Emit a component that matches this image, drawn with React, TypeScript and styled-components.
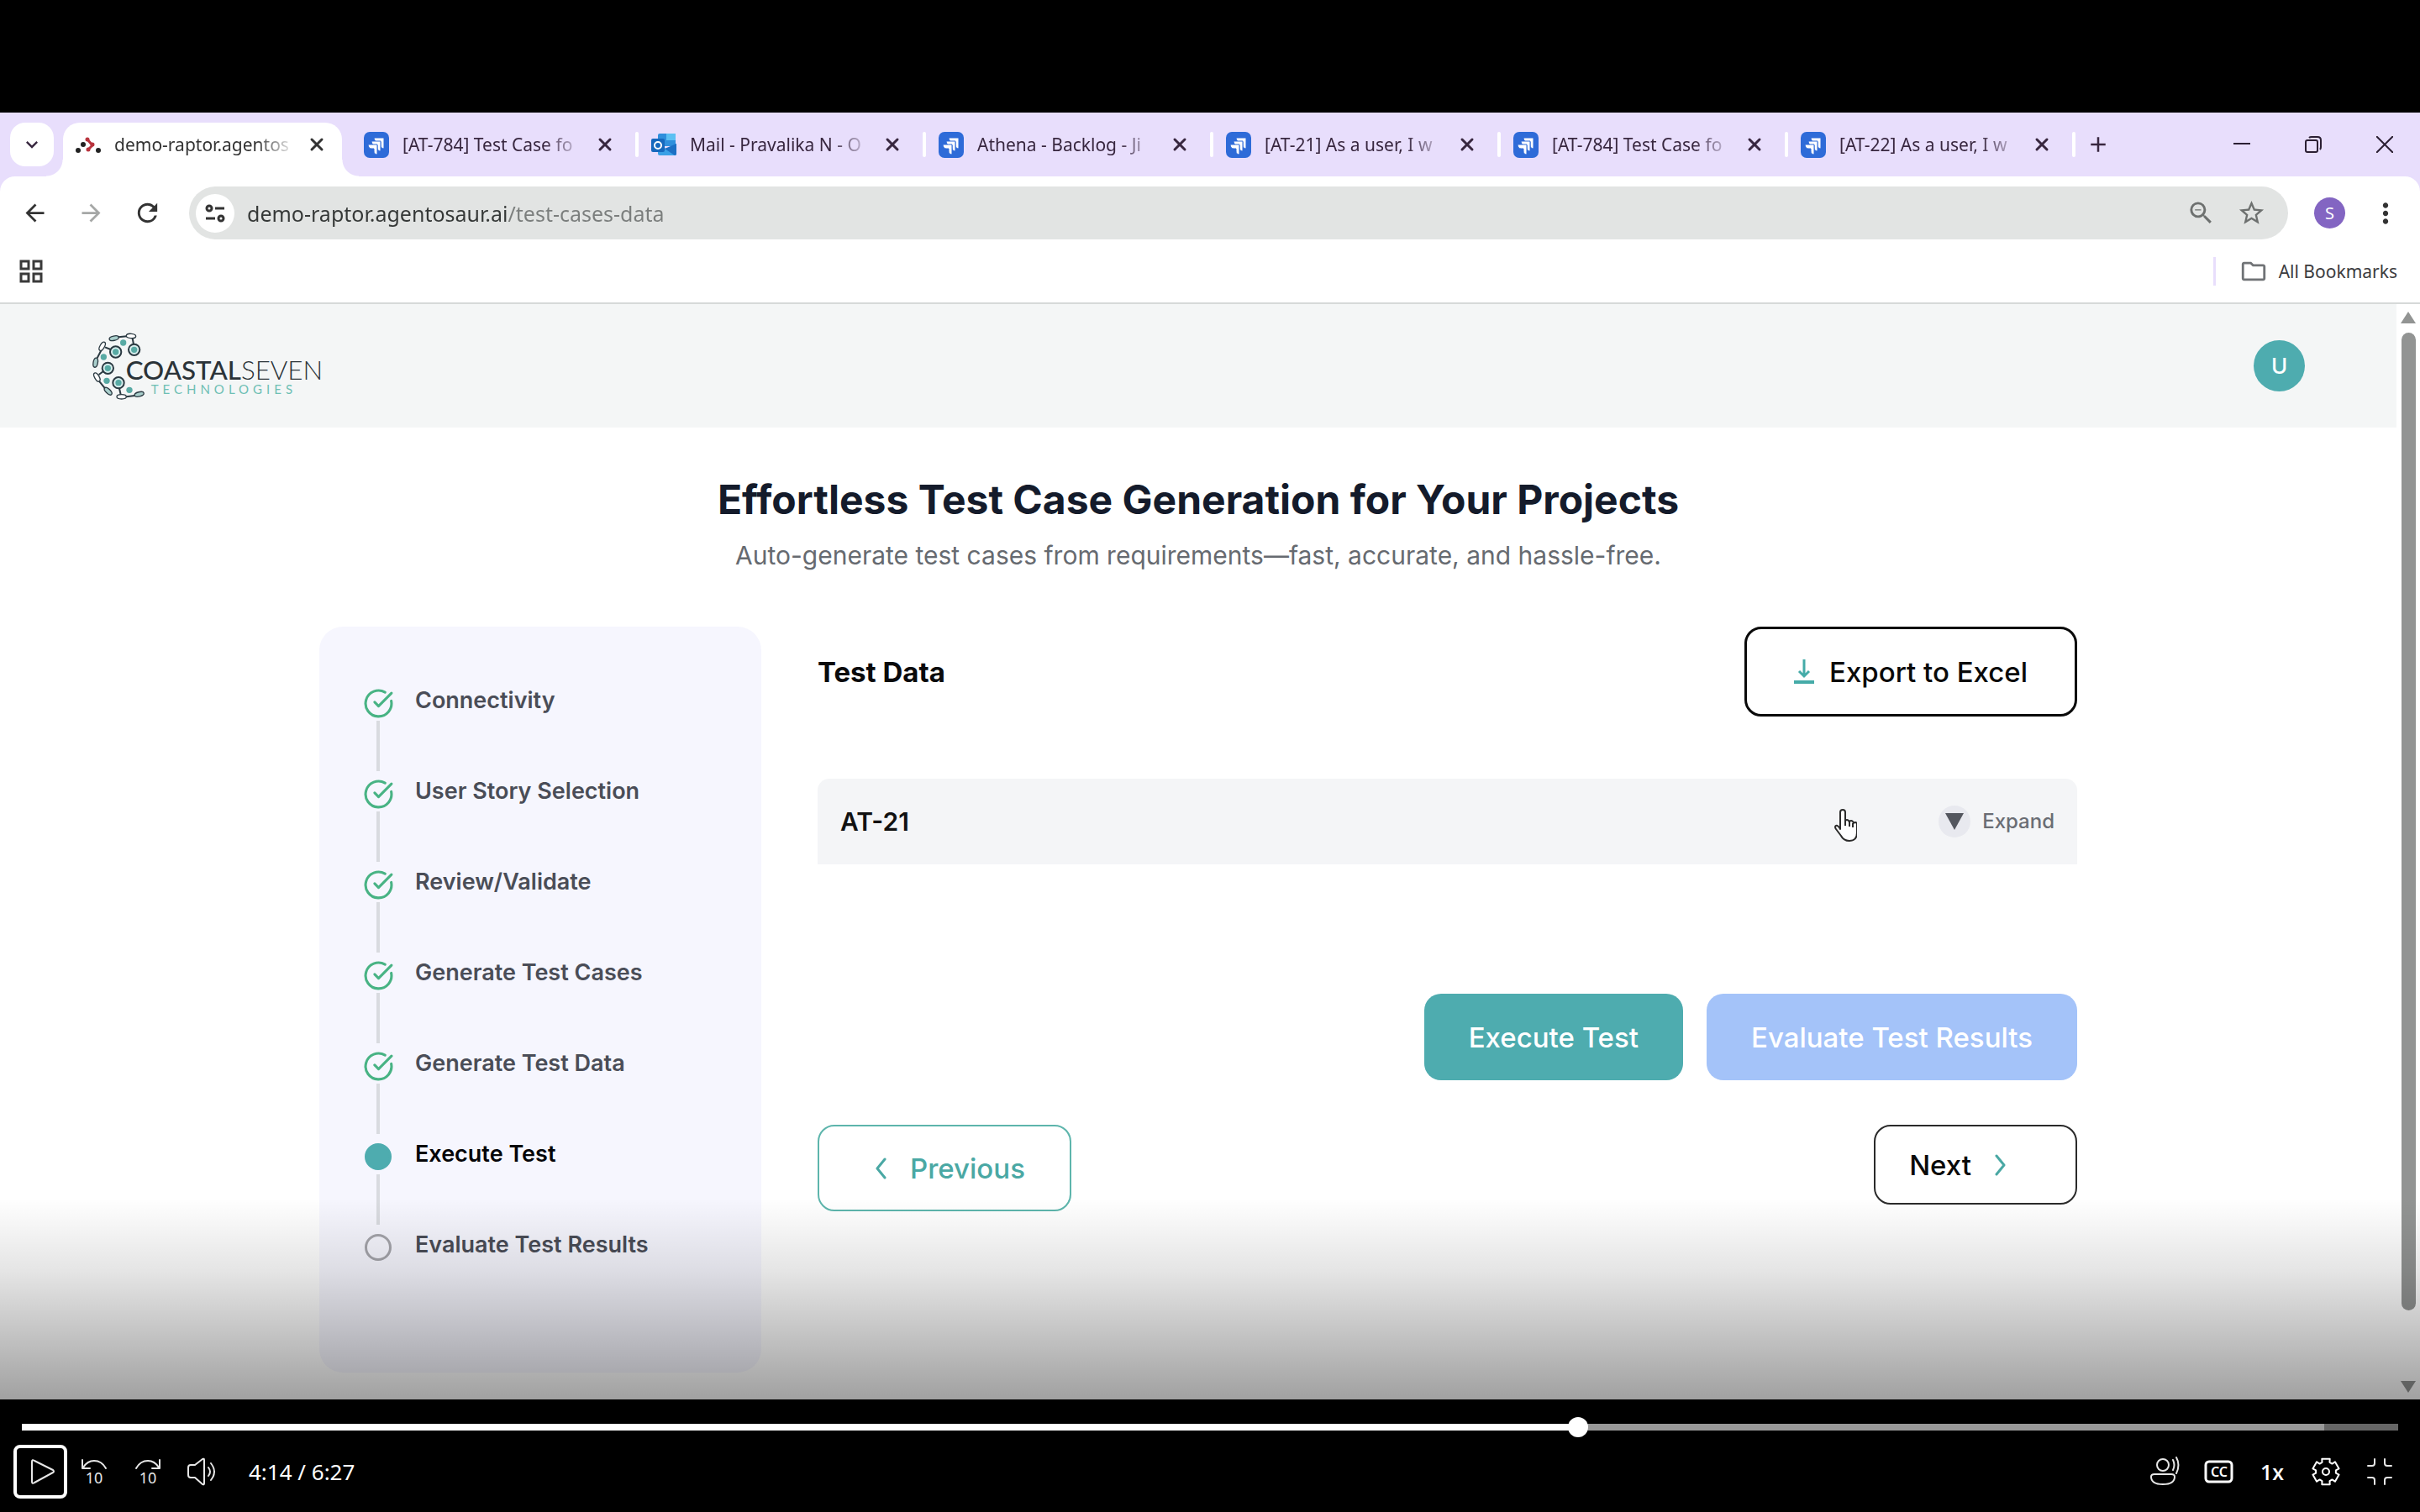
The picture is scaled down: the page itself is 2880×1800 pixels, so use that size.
import React from "react";
import styled, { createGlobalStyle, css } from "styled-components";
import { CircleCheckBig, X } from "lucide-react";
import {
  MdAdd,
  MdArrowBack,
  MdArrowForward,
  MdExpandMore,
  MdMoreVert,
  MdOutlineFolder,
  MdRefresh,
  MdStarOutline,
  MdZoomOut,
} from "react-icons/md";

const ui = `"Noto Sans", "Open Sans", sans-serif`;
const inter = `Inter, Roboto, sans-serif`;
const teal = "#4eacaf";

const GlobalStyle = createGlobalStyle`
  * { box-sizing: border-box; }
  body { margin: 0; background: #000; }
  button, input { font: inherit; color: inherit; margin: 0; }
  h1, h2, p, ol { margin: 0; padding: 0; }
  svg { display: block; flex: none; }
`;

/* ---------- player shell ---------- */

const Player = styled.div`
  min-height: 100vh;
  padding-top: 134px;
  display: flex;
  flex-direction: column;
  background: #000;
`;

const Frame = styled.div`
  position: relative;
  flex: 1;
  display: flex;
  flex-direction: column;
  background: #fff;
`;

const Shade = styled.div`
  position: absolute;
  inset: auto 0 0 0;
  height: 240px;
  pointer-events: none;
  background: linear-gradient(rgba(0, 0, 0, 0), rgba(0, 0, 0, 0.1) 36%, rgba(0, 0, 0, 0.37));
`;

const IconButton = styled.button<{ $size?: number; $color?: string }>`
  flex: none;
  width: ${(p) => p.$size ?? 64}px;
  height: ${(p) => p.$size ?? 64}px;
  padding: 0;
  border: 0;
  background: none;
  color: ${(p) => p.$color ?? "inherit"};
  display: flex;
  align-items: center;
  justify-content: center;
`;

/* ---------- browser chrome ---------- */

const TabStrip = styled.div`
  display: flex;
  align-items: center;
  height: 76px;
  padding-left: 12px;
  background: #e8defc;
  color: #38273f;
  font: 21px/32px ${ui};
`;

const TabSearch = styled.button`
  flex: none;
  width: 52px;
  height: 52px;
  margin-right: 11px;
  padding: 0;
  border: 0;
  border-radius: 18px;
  background: #fff;
  display: flex;
  align-items: center;
  justify-content: center;
`;

const TabBox = styled.div<{ $active?: boolean }>`
  position: relative;
  flex: none;
  display: flex;
  align-items: center;
  width: 342px;
  padding-left: 15px;
  height: 52px;

  ${(p) =>
    p.$active
      ? css`
          width: 332px;
          height: 64px;
          margin-right: 11px;
          align-self: flex-end;
          background: #fff;
          border-radius: 20px 20px 0 0;
          padding-bottom: 12px;
          color: #333;
          &::before,
          &::after {
            content: "";
            position: absolute;
            bottom: 0;
            width: 20px;
            height: 20px;
          }
          &::before {
            left: -20px;
            background: radial-gradient(circle at 0 0, transparent 19px, #fff 20px);
          }
          &::after {
            right: -20px;
            background: radial-gradient(circle at 100% 0, transparent 19px, #fff 20px);
          }
        `
      : css`
          &::after {
            content: "";
            width: 4px;
            height: 30px;
            margin-left: auto;
            border-radius: 2px;
            background: #fff;
          }
        `}
`;

const TabTitle = styled.span`
  width: 216px;
  margin: 0 11px 0 16px;
  white-space: nowrap;
  mask-image: linear-gradient(90deg, #000 78%, transparent);
`;

const Spacer = styled.div`
  flex: 1;
`;

const WindowButton = styled.button`
  flex: none;
  width: 85px;
  height: 76px;
  padding: 0;
  border: 0;
  background: none;
  display: flex;
  align-items: center;
  justify-content: center;
`;

const ToolbarBack = styled.div`
  background: #e8defc;
`;

const Toolbar = styled.div`
  display: flex;
  align-items: center;
  height: 75px;
  padding: 12px 8px 0;
  border-radius: 18px 18px 0 0;
  background: #fff;
  color: #333;
`;

const Omnibox = styled.form`
  flex: 1;
  display: flex;
  align-items: center;
  height: 63px;
  margin: 0 16px;
  padding: 0 14px 0 8px;
  border-radius: 32px;
  background: #e2e4e3;
`;

const SiteInfo = styled(IconButton)`
  border-radius: 50%;
  background: #fff;
`;

const Address = styled.input`
  flex: 1;
  min-width: 0;
  margin-left: 15px;
  padding: 0;
  border: 0;
  outline: 0;
  font: 25px/36px ${ui};
  color: transparent;
  background: linear-gradient(90deg, #353837 309px, #7b7e7d 309px);
  background-clip: text;
`;

const Profile = styled.button`
  flex: none;
  width: 37px;
  height: 37px;
  margin: 0 14px 0 15px;
  padding: 0;
  border: 0;
  border-radius: 50%;
  background: #8365c2;
  color: #fff;
  font: 20px/37px ${ui};
`;

const Bookmarks = styled.div`
  display: flex;
  align-items: center;
  height: 77px;
  padding: 0 27px 0 21px;
  border-bottom: 2px solid #d6d9d8;
  background: #fff;
  color: #3c3c40;
  font: 21px/32px ${ui};
`;

const AllBookmarks = styled.button`
  display: flex;
  align-items: center;
  gap: 13px;
  padding: 0 0 0 28px;
  border: 0;
  border-left: 3px solid #e8defc;
  background: none;
`;

/* ---------- web page ---------- */

const Viewport = styled.div`
  flex: 1;
  display: flex;
`;

const Page = styled.div`
  flex: 1;
  min-width: 0;
  font-family: ${inter};
`;

const SiteHeader = styled.header`
  display: flex;
  align-items: center;
  justify-content: space-between;
  height: 147px;
  padding: 0 109px;
  background: #f4f6f6;
`;

const UserBadge = styled.button`
  width: 61px;
  height: 61px;
  padding: 0;
  border: 0;
  border-radius: 50%;
  background: ${teal};
  color: #fff;
  font: 500 26px/61px ${inter};
`;

const Hero = styled.section`
  padding: 54px 0 65px;
  text-align: center;
`;

const Title = styled.h1`
  font: 700 48px/64px ${inter};
  color: #141b2b;
`;

const Subtitle = styled.p`
  margin-top: 14px;
  font: 400 30px/40px ${inter};
  color: #666a70;
`;

const Columns = styled.div`
  display: flex;
  align-items: flex-start;
  gap: 67px;
  padding: 0 380px 32px;
`;

const Sidebar = styled.nav`
  flex: none;
  width: 526px;
  padding: 75px 54px 133px;
  border-radius: 28px;
  background: #f6f6fe;
`;

const Steps = styled.ol`
  list-style: none;
`;

const Step = styled.li<{ $current?: boolean }>`
  display: flex;
  gap: 28px;
  font: 600 27px/26px ${inter};
  color: ${(p) => (p.$current ? "#050508" : "#4a4d57")};
`;

const StepRail = styled.div`
  display: flex;
  flex-direction: column;
  align-items: center;
  width: 32px;
`;

const StepLine = styled.div`
  width: 4px;
  height: 60px;
  margin: 5px 0 11px;
  background: #d9dbe0;
`;

const StepDot = styled.div<{ $filled?: boolean }>`
  width: 32px;
  height: 32px;
  border-radius: 50%;
  border: 3px solid ${(p) => (p.$filled ? teal : "#a5a5ab")};
  background: ${(p) => (p.$filled ? teal : "transparent")};
`;

const DoneMark = styled.div`
  display: flex;
  align-items: center;
  justify-content: center;
  width: 36px;
  height: 32px;
`;

const Main = styled.main`
  flex: 1;
  min-width: 0;
`;

const Row = styled.div<{ $top?: number; $end?: boolean }>`
  display: flex;
  align-items: ${(p) => (p.$end ? "center" : "flex-start")};
  justify-content: ${(p) => (p.$end ? "flex-end" : "space-between")};
  gap: 28px;
  margin-top: ${(p) => p.$top ?? 0}px;
`;

const SectionTitle = styled.h2`
  align-self: center;
  font: 700 33px/40px ${inter};
  color: #0a0a0c;
`;

const Action = styled.button<{ $kind: "export" | "solid" | "muted" | "previous" | "next" }>`
  display: flex;
  align-items: center;
  justify-content: center;
  padding: 0 53px;
  height: 103px;
  border: 0;
  border-radius: 20px;
  background: #fff;
  font: 500 33px/40px ${inter};
  color: #fff;
  white-space: nowrap;

  ${(p) => p.$kind === "export" && css`
    height: 107px;
    padding: 0 56px;
    gap: 18px;
    border: 3px solid #0a0a0a;
    color: #0a0a0a;
  `}
  ${(p) => p.$kind === "solid" && css`background: ${teal};`}
  ${(p) => p.$kind === "muted" && css`background: #a4c3f9;`}
  ${(p) => p.$kind === "previous" && css`
    padding: 0 53px 0 66px;
    gap: 28px;
    border: 2px solid #5db5ac;
    color: #4aa8a4;
  `}
  ${(p) => p.$kind === "next" && css`
    height: 95px;
    padding: 0 82px 0 40px;
    gap: 28px;
    border: 2px solid #2a2a2a;
    color: #0a0a0a;
  `}
`;

const StoryRow = styled.div`
  position: relative;
  display: flex;
  align-items: center;
  justify-content: space-between;
  height: 102px;
  margin-top: 74px;
  padding: 0 27px;
  border-radius: 14px 14px 0 0;
  background: #f4f5f7;
  font: 600 30px/40px ${inter};
  color: #111;
`;

const Expand = styled.button`
  display: flex;
  align-items: center;
  gap: 14px;
  padding: 0;
  border: 0;
  background: none;
  font: 500 24px/38px ${inter};
  color: #6a6d74;
`;

const ExpandMark = styled.span`
  display: flex;
  align-items: center;
  justify-content: center;
  width: 38px;
  height: 38px;
  border-radius: 50%;
  background: #e8e9ef;
`;

const Pointer = styled.svg`
  position: absolute;
  right: 262px;
  top: 36px;
`;

const Scrollbar = styled.div`
  flex: none;
  display: flex;
  flex-direction: column;
  align-items: center;
  width: 28px;
  padding: 9px 0 8px;
  background: #fff;
`;

const Thumb = styled.div`
  flex: 1;
  width: 17px;
  margin: 11px 0 84px;
  border-radius: 9px;
  background: #929493;
`;

/* ---------- player controls ---------- */

const Controls = styled.div`
  height: 134px;
  padding: 20px 16px 16px;
  background: #000;
  color: #fff;
`;

const Seek = styled.input`
  display: block;
  appearance: none;
  width: calc(100% - 20px);
  height: 26px;
  margin: 0 10px;
  background: none;

  &::-webkit-slider-runnable-track {
    height: 8px;
    background: linear-gradient(
      90deg,
      #fff var(--played),
      #999 var(--played),
      #999 var(--buffered),
      #666 var(--buffered)
    );
  }
  &::-webkit-slider-thumb {
    appearance: none;
    width: 24px;
    height: 24px;
    margin-top: -8px;
    border-radius: 50%;
    background: #fff;
  }
`;

const ControlRow = styled.div`
  display: flex;
  align-items: center;
  margin-top: 8px;
  font: 26px/36px ${ui};
`;

const PlayButton = styled(IconButton)`
  border: 4px solid #fff;
  border-radius: 8px;
`;

const Time = styled.span`
  margin-left: 24px;
`;

const Speed = styled(IconButton)`
  font: 600 25px/36px "Open Sans", sans-serif;
`;

/* ---------- drawings ---------- */

const Glyph = ({ children, width = 2 }: { children: React.ReactNode; width?: number }) => (
  <svg width="64" height="64" viewBox="0 0 64 64" fill="none" stroke="#e6e6e6" strokeWidth={width} strokeLinecap="round" strokeLinejoin="round">
    {children}
  </svg>
);

const Chevron = ({ left }: { left?: boolean }) => (
  <svg width="14" height="26" fill="none" stroke="#4aa8a4" strokeWidth="3" strokeLinecap="round" strokeLinejoin="round">
    <path d={left ? "M12 2L3 13l9 11" : "M2 2l9 11-9 11"} />
  </svg>
);

const JiraIcon = () => (
  <svg width="30" height="31" viewBox="0 0 30 31">
    <rect width="30" height="31" rx="7" fill="#2e6bd8" />
    <g fill="#fff" stroke="#2e6bd8" strokeWidth="1">
      <path d="M12 7h12v13c-3 0-4-2-4-4v-4h-4c-2 0-4-2-4-5z" />
      <path d="M9 11h11v12c-3 0-4-2-4-4v-3h-3c-2 0-4-2-4-5z" />
      <path d="M5 15h11v12c-3 0-4-2-4-4v-3H9c-2 0-4-2-4-5z" />
    </g>
  </svg>
);

const OutlookIcon = () => (
  <svg width="30" height="31" viewBox="0 0 30 31">
    <rect x="8" y="2" width="21" height="15" rx="2" fill="#2f8fdc" />
    <rect x="18" y="2" width="11" height="8" fill="#5cc0f2" />
    <path d="M8 14l11 7 11-7v12a2 2 0 0 1-2 2H10a2 2 0 0 1-2-2z" fill="#3aa0e6" />
    <path d="M30 14v12a2 2 0 0 1-2 2L16 20z" fill="#1c6fc4" />
    <rect x="0" y="8" width="16" height="16" rx="2" fill="#1668bd" />
    <circle cx="8" cy="16" r="4" fill="none" stroke="#fff" strokeWidth="2" />
  </svg>
);

const AgentIcon = () => (
  <svg width="30" height="31" viewBox="0 0 30 31">
    <g stroke="#b8333d" strokeWidth="3" fill="#b8333d">
      <path d="M14 9l6 7-5 5" fill="none" />
      <circle cx="14" cy="9" r="1" />
      <circle cx="20" cy="15" r="1" />
      <circle cx="15" cy="21" r="1" />
    </g>
    <g fill="#222">
      <circle cx="9" cy="15" r="3" />
      <circle cx="3" cy="22" r="3" />
      <circle cx="27" cy="22" r="3" />
    </g>
  </svg>
);

const rings = [[302, 170], [236, 178], [208, 236], [246, 288]];
const dots = [[263, 145], [193, 196], [204, 281], [285, 314]];
const pods: [number, number, number, boolean][] = [
  [230, 129, -12, true], [291, 121, 4, false], [188, 158, -60, false], [164, 216, -80, true],
  [169, 268, 60, false], [209, 318, 45, true], [257, 338, 0, false], [320, 329, -14, true],
];

const Logo = () => (
  <svg width="277" height="82" viewBox="150 106 831 246" role="img" aria-label="CoastalSeven Technologies">
    <g fill="none" stroke="#2b3a42" strokeWidth="6">
      <path d="M246 125l30-3M296 129l4 22M198 161l20 8M184 173l-14 27M192 247l-16 12M176 281l22 27M249 308l5 22M274 338l30-4" />
      {rings.map(([x, y]) => (
        <circle key={x} cx={x} cy={y} r="20" fill="#d8efee" />
      ))}
      {pods.map(([x, y, a, tinted]) => (
        <ellipse key={x} cx={x} cy={y} rx="17" ry="8" strokeWidth="4" fill={tinted ? "#a9cfcc" : "#fff"} transform={`rotate(${a} ${x} ${y})`} />
      ))}
    </g>
    <g fill="#58aaa4">
      {rings.map(([x, y]) => (
        <circle key={x} cx={x} cy={y} r="11" />
      ))}
      {dots.map(([x, y]) => (
        <circle key={x} cx={x} cy={y} r="11" />
      ))}
    </g>
    <text x="272" y="276" fontFamily="Lato, sans-serif" fontSize="94" fontWeight="500" fill="#2b3338">
      COASTAL<tspan fontWeight="300">SEVEN</tspan>
    </text>
    <text x="362" y="329" fontFamily="Lato, sans-serif" fontSize="45" letterSpacing="15" fill="#6dbfb4">
      TECHNOLOGIES
    </text>
  </svg>
);

const gearPoints = Array.from({ length: 6 }, (_, i) =>
  [[-22, 12], [-17, 16], [17, 16], [22, 12]].map(([offset, radius]) => {
    const angle = ((i * 60 + offset - 90) * Math.PI) / 180;
    return `${32 + radius * Math.cos(angle)},${32 + radius * Math.sin(angle)}`;
  }).join(" ")
).join(" ");

/* ---------- data ---------- */

const tabs = [
  { title: "demo-raptor.agentos", icon: <AgentIcon />, active: true },
  { title: "[AT-784] Test Case fo", icon: <JiraIcon /> },
  { title: "Mail - Pravalika N - O", icon: <OutlookIcon /> },
  { title: "Athena - Backlog - Ji", icon: <JiraIcon /> },
  { title: "[AT-21] As a user, I w", icon: <JiraIcon /> },
  { title: "[AT-784] Test Case fo", icon: <JiraIcon /> },
  { title: "[AT-22] As a user, I w", icon: <JiraIcon /> },
];

const steps = [
  { label: "Connectivity", state: "done" },
  { label: "User Story Selection", state: "done" },
  { label: "Review/Validate", state: "done" },
  { label: "Generate Test Cases", state: "done" },
  { label: "Generate Test Data", state: "done" },
  { label: "Execute Test", state: "current" },
  { label: "Evaluate Test Results", state: "todo" },
];

const duration = 387;
const position = 254;
const buffered = 375;

const percent = (seconds: number) => `${(seconds / duration) * 100}%`;

/* ---------- sections ---------- */

const BrowserChrome = () => (
  <>
    <TabStrip>
      <TabSearch aria-label="Search tabs"><MdExpandMore size={28} /></TabSearch>
      {tabs.map((tab, i) => (
        <TabBox key={i} $active={tab.active}>
          {tab.icon}
          <TabTitle>{tab.title}</TabTitle>
          <IconButton $size={28} aria-label="Close tab"><X size={24} strokeWidth={3} /></IconButton>
        </TabBox>
      ))}
      <IconButton $size={54} aria-label="New tab"><MdAdd size={30} /></IconButton>
      <Spacer />
      <WindowButton aria-label="Minimize">
        <svg width="20" height="20" stroke="#2b1f33" strokeWidth="2"><path d="M0 9h20" /></svg>
      </WindowButton>
      <WindowButton aria-label="Restore">
        <svg width="22" height="22" fill="none" stroke="#2b1f33" strokeWidth="2">
          <rect x="2" y="6" width="14" height="14" rx="2" />
          <path d="M6 3q1-1 3-1h7q4 0 4 4v8q0 2-1 3" />
        </svg>
      </WindowButton>
      <WindowButton aria-label="Close">
        <svg width="20" height="20" stroke="#2b1f33" strokeWidth="2"><path d="M0 0l20 20M20 0L0 20" /></svg>
      </WindowButton>
    </TabStrip>
    <ToolbarBack>
      <Toolbar>
        <IconButton $size={67} aria-label="Back"><MdArrowBack size={33} /></IconButton>
        <IconButton $size={67} aria-label="Forward" $color="#a5a7a6"><MdArrowForward size={33} /></IconButton>
        <IconButton $size={67} aria-label="Reload"><MdRefresh size={35} /></IconButton>
        <Omnibox>
          <SiteInfo $size={46} type="button" aria-label="Site information">
            <svg width="24" height="24" fill="none" stroke="#333" strokeWidth="3">
              <circle cx="5" cy="6" r="3" />
              <path d="M12 6h11M1 18h11" />
              <circle cx="19" cy="18" r="3" />
            </svg>
          </SiteInfo>
          <Address aria-label="Address" defaultValue="demo-raptor.agentosaur.ai/test-cases-data" />
          <IconButton $size={60} type="button" aria-label="Zoom" $color="#6d706f"><MdZoomOut size={35} /></IconButton>
          <IconButton $size={60} type="button" aria-label="Bookmark" $color="#6d706f"><MdStarOutline size={35} /></IconButton>
        </Omnibox>
        <Profile aria-label="Profile">S</Profile>
        <IconButton $size={67} aria-label="Menu"><MdMoreVert size={38} /></IconButton>
      </Toolbar>
    </ToolbarBack>
    <Bookmarks>
      <IconButton $size={32} aria-label="Apps">
        <svg width="28" height="28" fill="none" stroke="#3a3a3a" strokeWidth="3">
          <rect x="2" y="2" width="9" height="9" />
          <rect x="17" y="2" width="9" height="9" />
          <rect x="2" y="17" width="9" height="9" />
          <rect x="17" y="17" width="9" height="9" />
        </svg>
      </IconButton>
      <Spacer />
      <AllBookmarks><MdOutlineFolder size={34} color="#707376" />All Bookmarks</AllBookmarks>
    </Bookmarks>
  </>
);

const StepList = () => (
  <Sidebar aria-label="Progress">
    <Steps>
      {steps.map((step, i) => (
        <Step key={step.label} $current={step.state === "current"}>
          <StepRail>
            {step.state === "done" ? (
              <DoneMark><CircleCheckBig size={37} strokeWidth={2} color="#48b384" /></DoneMark>
            ) : (
              <StepDot $filled={step.state === "current"} />
            )}
            {i < steps.length - 1 && <StepLine />}
          </StepRail>
          {step.label}
        </Step>
      ))}
    </Steps>
  </Sidebar>
);

const Workspace = () => (
  <Main>
    <Row>
      <SectionTitle>Test Data</SectionTitle>
      <Action $kind="export">
        <svg width="24" height="30" fill="none" stroke="#45aba8" strokeWidth="3">
          <path d="M12 0v20M6 14l6 6 6-6" />
          <path d="M0 27h24" strokeWidth="4" />
        </svg>
        Export to Excel
      </Action>
    </Row>
    <StoryRow>
      AT-21
      <Expand>
        <ExpandMark>
          <svg width="22" height="20"><path d="M0 0h22L11 20z" fill="#54575f" /></svg>
        </ExpandMark>
        Expand
      </Expand>
      <Pointer width="28" height="40" viewBox="0 0 28 40" fill="#fff" stroke="#2b2b2b" strokeWidth="2" strokeLinejoin="round">
        <path d="M8 22V4q0-3 3-3t3 3v11q0-2 2-2t3 3q0-2 2-2t3 3q0-1 2-1t2 3v9q0 10-9 10-7 0-10-6L3 24q-2-3 0-4t5 4z" />
        <path d="M14 14v6M19 16v5M23 17v5" />
      </Pointer>
    </StoryRow>
    <Row $top={154} $end>
      <Action $kind="solid">Execute Test</Action>
      <Action $kind="muted">Evaluate Test Results</Action>
    </Row>
    <Row $top={53}>
      <Action $kind="previous"><Chevron left />Previous</Action>
      <Action $kind="next">Next<Chevron /></Action>
    </Row>
  </Main>
);

const PlayerControls = () => (
  <Controls>
    <Seek
      type="range"
      aria-label="Seek"
      min={0}
      max={duration}
      defaultValue={position}
      style={{ "--played": percent(position), "--buffered": percent(buffered) } as React.CSSProperties}
    />
    <ControlRow>
      <PlayButton aria-label="Play">
        <Glyph><path d="M22 20q0-3 3-1l22 11q2 2 0 3L25 45q-3 2-3-1z" /></Glyph>
      </PlayButton>
      <IconButton aria-label="Back 10 seconds">
        <Glyph>
          <path d="M18 18v10h9M19 27q5-8 13-8 9 0 14 9" />
          <text x="32" y="46" textAnchor="middle" fontFamily="Noto Sans, sans-serif" fontSize="18" fill="#e6e6e6" stroke="none">10</text>
        </Glyph>
      </IconButton>
      <IconButton aria-label="Forward 10 seconds">
        <Glyph>
          <path d="M46 18v10h-9M45 27q-5-8-13-8-9 0-14 9" />
          <text x="32" y="46" textAnchor="middle" fontFamily="Noto Sans, sans-serif" fontSize="18" fill="#e6e6e6" stroke="none">10</text>
        </Glyph>
      </IconButton>
      <IconButton aria-label="Volume">
        <Glyph><path d="M16 27q0-3 3-3h5l9-7q2-1 2 1v28q0 2-2 1l-9-8h-5q-3 0-3-3zM40 27q4 5 0 10M43 22q8 10 0 20" /></Glyph>
      </IconButton>
      <Time>4:14 / 6:27</Time>
      <Spacer />
      <IconButton aria-label="Transcript">
        <Glyph>
          <circle cx="30" cy="24" r="7" />
          <path d="M20 35h20q4 0 4 3 0 9-14 9t-14-9q0-3 4-3zM42 18q3 6 0 12M46 15q5 9 0 19" />
        </Glyph>
      </IconButton>
      <IconButton aria-label="Captions">
        <Glyph width={3}>
          <rect x="17" y="20" width="31" height="24" rx="4" stroke="#fff" />
          <text x="33" y="38" textAnchor="middle" fontFamily="Noto Sans, sans-serif" fontSize="16" fontWeight="600" fill="#fff" stroke="none">CC</text>
        </Glyph>
      </IconButton>
      <Speed aria-label="Playback speed">1x</Speed>
      <IconButton aria-label="Settings">
        <Glyph width={2}>
          <polygon points={gearPoints} stroke="#fff" />
          <circle cx="32" cy="32" r="4" stroke="#fff" />
        </Glyph>
      </IconButton>
      <IconButton aria-label="Exit full screen">
        <Glyph><path d="M18 25h5q3 0 3-3v-5M46 25h-5q-3 0-3-3v-5M18 39h5q3 0 3 3v5M46 39h-5q-3 0-3 3v5" /></Glyph>
      </IconButton>
    </ControlRow>
  </Controls>
);

export default function App() {
  return (
    <Player>
      <GlobalStyle />
      <Frame>
        <BrowserChrome />
        <Viewport>
          <Page>
            <SiteHeader>
              <Logo />
              <UserBadge aria-label="Account">U</UserBadge>
            </SiteHeader>
            <Hero>
              <Title>Effortless Test Case Generation for Your Projects</Title>
              <Subtitle>Auto-generate test cases from requirements—fast, accurate, and hassle-free.</Subtitle>
            </Hero>
            <Columns>
              <StepList />
              <Workspace />
            </Columns>
          </Page>
          <Scrollbar>
            <svg width="18" height="14"><path d="M9 0l9 14H0z" fill="#929493" /></svg>
            <Thumb />
            <svg width="18" height="14"><path d="M9 14L0 0h18z" fill="#929493" /></svg>
          </Scrollbar>
        </Viewport>
        <Shade />
      </Frame>
      <PlayerControls />
    </Player>
  );
}
